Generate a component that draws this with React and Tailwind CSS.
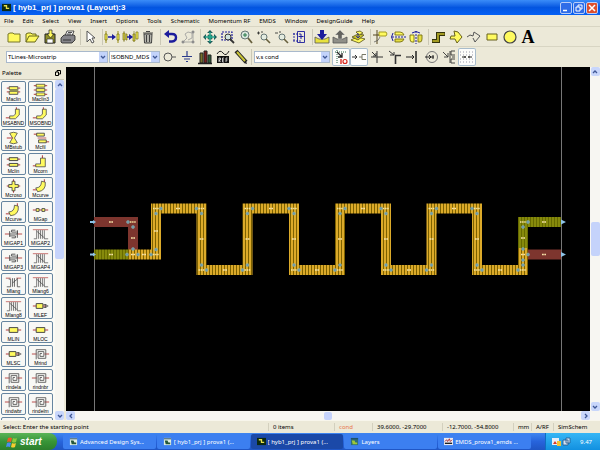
import React, { useState } from "react";
import clsx from "clsx";

const Y = "#fffa5e";
const K = "#222";
const N = "#1c1c9c";

const menus = [
  "File", "Edit", "Select", "View", "Insert", "Options", "Tools",
  "Schematic", "Momentum RF", "EMDS", "Window", "DesignGuide", "Help",
];

// 18x18 drawings used by both toolbars
const icons = {
  new: <path d="M3 6l2-1h3l1 1h6v8H3z" fill={Y} stroke="#77772a" />,
  open: (
    <g fill={Y} stroke="#66661c">
      <path d="M3 14V6l2-1h3l1 1h4v2" />
      <path d="M3 14l3-6h10l-4 6z" />
    </g>
  ),
  save: (
    <g>
      <path d="M4 6h10v9H4z" fill="#8f8f2a" stroke={K} />
      <path d="M6 11h6v4H6z" fill="#fff" stroke={K} strokeWidth=".6" />
      <path d="M8 2h3v4h2l-3.500 4L6 6h2z" fill={Y} stroke={K} strokeWidth=".7" />
    </g>
  ),
  print: (
    <g stroke={K} strokeWidth=".8">
      <path d="M6 8l2-5h7l-2 5z" fill="#fff" />
      <path d="M2 10l3-3h10l1 1v4l-3 3H3l-1-1z" fill="#85858a" />
      <path d="M4 12h8M9 4.500h4M8 6h4" />
    </g>
  ),
  pointer: <path d="M6 3v11l3-3 2 4 2-1-2-4h3z" fill="#fff" stroke="#555" />,
  move: (
    <g>
      <path d="M3 3v12M15 3v12" stroke="#998c10" />
      <path d="M2 6h2v6H2zM14 6h2v6h-2z" fill={Y} stroke="#776f10" strokeWidth=".8" />
      <path d="M5 9h5" stroke={N} strokeWidth="1.500" />
      <path d="M9 6l4 3-4 3z" fill={N} />
    </g>
  ),
  copy: (
    <g>
      <path d="M2 5h2v7H2zM5 6h1v6H5zM12 6h2v7h-2zM15 4h2v7h-2z" fill={Y} stroke="#776f10" strokeWidth=".7" />
      <path d="M13 3v11M3 3v11" stroke="#776f10" strokeWidth=".6" />
      <path d="M6 9h3" stroke={N} strokeWidth="1.500" />
      <path d="M8 6l4 3-4 3z" fill={N} />
    </g>
  ),
  trash: (
    <g stroke="#333" strokeWidth=".9">
      <path d="M5 6h8l-.5 9h-7z" fill="#b5b5ad" />
      <path d="M4 5h10M7 3.500h4M7.500 7v7M10.500 7v7" />
    </g>
  ),
  undo: (
    <g>
      <path d="M7 6h4q4 0 4 3.500T11 13.500H8" fill="none" stroke={N} strokeWidth="2.400" />
      <path d="M8 2v8L3 6z" fill={N} />
    </g>
  ),
  endcmd: (
    <g fill="none" stroke="#999" strokeWidth=".8">
      <path d="M4 14h11M5 13l3-3-2-4 3-2 4 1v5l-4 2M14 4v10" />
      <path d="M3 13h2v2H3zM13 13h2v2h-2zM13 3h2v2h-2z" fill="#777" />
    </g>
  ),
  fit: (
    <g>
      <path d="M7 7h4v4H7z" fill="#25b49a" stroke={K} strokeWidth=".5" />
      <path d="M9 2l3 3H6zM9 16l-3-3h6zM2 9l3-3v6zM16 9l-3 3V6z" fill="#1b5a58" />
      <path d="M9 4v10M4 9h10" stroke="#25a48c" strokeWidth="1.500" />
    </g>
  ),
  zoomArea: (
    <g fill="none">
      <path d="M3 4h10v8H3z" stroke={N} strokeWidth="1.200" strokeDasharray="2 1" />
      <circle cx="9" cy="9" r="3" stroke="#333" fill="#cfe3df" />
      <path d="M11 11l4 4" stroke="#333" strokeWidth="1.800" />
    </g>
  ),
  zoomPt: (
    <g fill="none">
      <circle cx="8" cy="7" r="4" stroke="#677" fill="#d9e7dd" />
      <path d="M8 5v4M6 7h4" stroke="#287a48" />
      <path d="M11 10l4 5" stroke="#665f3c" strokeWidth="1.800" />
    </g>
  ),
  zoomIn: (
    <g fill="none">
      <circle cx="9" cy="9" r="3" stroke="#677" fill="#e4ece0" />
      <path d="M11 11l4 4" stroke="#665f3c" strokeWidth="1.600" />
      <path d="M2 5h3M3.500 3.500v3M6 4h2" stroke={K} strokeWidth=".8" />
    </g>
  ),
  zoomOut: (
    <g fill="none">
      <circle cx="9" cy="9" r="3" stroke="#677" fill="#e4ece0" />
      <path d="M11 11l4 4" stroke="#665f3c" strokeWidth="1.600" />
      <path d="M2 5h3M6 4h2" stroke={K} strokeWidth=".8" />
    </g>
  ),
  pan: (
    <g fill="none" stroke={N}>
      <path d="M6.500 3.500h7v11h-7z" strokeWidth=".9" />
      <path d="M2 6h9M2 13h9M3 5v9" strokeDasharray="2 1" strokeWidth=".9" />
      <path d="M10 6v5M7.500 8.500h5" />
    </g>
  ),
  push: (
    <g>
      <path d="M2 9l4 2h6l4-2v6H2z" fill="#e8e23c" stroke="#555" strokeWidth=".8" />
      <path d="M7 2h4v4h3l-5 6-5-6h3z" fill={N} />
    </g>
  ),
  pop: (
    <g>
      <path d="M2 9l4 2h6l4-2v6H2z" fill="#8f8f88" stroke="#555" strokeWidth=".8" />
      <path d="M7 11h4V7h3L9 2 4 7h3z" fill="#63635e" stroke="#ddd" strokeWidth=".4" />
    </g>
  ),
  layers: (
    <g stroke="#55501a" strokeWidth=".8">
      <path d="M2 12l6-3 8 2-6 4z" fill={Y} />
      <path d="M3 9l6-3 6 1-6 5z" fill="#c9c32f" />
      <path d="M7 4l4-1 3 2-4 2z" fill={Y} />
      <path d="M9 5v5M7 8l2 2 2-2" stroke={N} fill="none" />
    </g>
  ),
  rotate: (
    <g fill="none">
      <path d="M8 4h7l1 2-1 2H8z" fill={Y} stroke="#a39b23" />
      <path d="M6 2v14M2 7h6" stroke="#55461f" />
      <path d="M3 14q5-1 6-5" stroke="#555" strokeWidth=".7" />
    </g>
  ),
  mirrorX: (
    <g>
      <path d="M6 4h5q3 0 4 3H6z" fill={Y} stroke="#776f10" strokeWidth=".9" />
      <path d="M6 14h5q3 0 4-3H6z" fill="#e5de44" stroke="#776f10" strokeWidth=".9" />
      <path d="M3 9h14" stroke={N} strokeDasharray="2 1" />
      <path d="M4 5q-3 4 0 8" fill="none" stroke={N} />
    </g>
  ),
  mirrorY: (
    <g>
      <path d="M3 7h4v7H5q-2 0-2-3z" fill={Y} stroke="#776f10" strokeWidth=".9" />
      <path d="M15 7h-4v7h2q2 0 2-3z" fill="#e5de44" stroke="#776f10" strokeWidth=".9" />
      <path d="M9 3v13" stroke={N} strokeDasharray="2 1" />
      <path d="M5 5q4-3 8 0" fill="none" stroke={N} />
    </g>
  ),
  trace: (
    <g fill="none">
      <path d="M3 13h6V6h7" stroke="#33330c" strokeWidth="4" />
      <path d="M3.500 13H9V6h6.500" stroke="#a39b23" strokeWidth="2" />
    </g>
  ),
  polygon: <path d="M7 3l4 1 4 5-5 6-2-4H3l1-3h4z" fill={Y} stroke="#66601c" />,
  polyline: <path d="M2 9l3-2 3 1 1-4 6 4-5 6-2-4" fill="none" stroke="#555" />,
  rect: <path d="M4 6h10v6H4z" fill={Y} stroke="#66601c" />,
  circle: <circle cx="9" cy="9" r="6" fill={Y} stroke="#444" strokeWidth="1.200" />,
  port: (
    <g fill="none" stroke="#555">
      <circle cx="8" cy="9" r="4" />
      <path d="M12 9h4" />
    </g>
  ),
  ground: <path d="M9 3v5M4 8.500h10M6 11h6M8 13.500h2" stroke="#2b3b8c" strokeWidth="1.200" />,
  library: (
    <g stroke={K} strokeWidth="1">
      <path d="M4 5h3v10H4z" fill="#77702a" />
      <path d="M8 3h3v12H8z" fill="#7a1f1f" />
      <path d="M12 7h3v8h-3z" fill="#2a5f37" />
      <path d="M2 15.500h14" strokeWidth="1.500" />
    </g>
  ),
  ref: (
    <g fill="none">
      <path d="M3 6q3-5 6-1t6-2" stroke={K} />
      <path d="M3 8h12v7H3z" fill="#111" />
      <path d="M5 14v-4h1.500v2H5l1.500 2M10 10H8.500v4H10M8.500 12H10M12 14v-4h1.500M12 12h1.500" stroke="#fff" strokeWidth=".7" />
    </g>
  ),
  pencil: (
    <g>
      <path d="M4 3l10 11" stroke="#222" strokeWidth="4" />
      <path d="M5 4l8 9" stroke="#c9c436" strokeWidth="2" />
      <path d="M15 16l-1-3-2 2z" fill={K} />
    </g>
  ),
  snapOn: (
    <g fill="none">
      <path d="M3 4h12M5 2v13" stroke="#2b6b48" strokeDasharray="1 1" />
      <path d="M5 4l5 5M10 5v4H6" stroke={K} strokeWidth="1.300" />
      <path d="M9 11v5" stroke="#d8271c" strokeWidth="1.400" />
      <circle cx="13" cy="13.500" r="2" stroke="#d8271c" strokeWidth="1.200" />
    </g>
  ),
  snapPin: (
    <g fill="none" stroke="#333">
      <path d="M2 9h5M5 7l2 2-2 2" />
      <path d="M9 9h3M16 6.500h-4v5h4" stroke="#776" />
    </g>
  ),
  snapVertex: <path d="M9 3v12M3 9h12M4 4l4 4M8 5v3H5" fill="none" stroke="#333" />,
  snapMid: (
    <g fill="none" stroke="#333">
      <path d="M15 7.500H9.500V16" strokeWidth="1.600" />
      <path d="M3 3l5 4M8 4v3H4" />
    </g>
  ),
  snapInter: (
    <g fill="none" stroke="#222">
      <path d="M2 9h8M8 7l2 2-2 2" />
      <path d="M12 3v12" strokeWidth="1.500" />
    </g>
  ),
  snapArc: (
    <g fill="none" stroke="#777">
      <circle cx="10" cy="9" r="5.500" />
      <path d="M3 9h9M7 7l2 2-2 2M11 7v4" stroke="#222" />
    </g>
  ),
  snapEdge: (
    <g fill="none" stroke="#333">
      <path d="M3 4l5 5M8 5v4H4M10 3v12M15 3h-4v4h4M15 11h-4v4h4M12 9h3" strokeWidth=".9" />
    </g>
  ),
  snapGrid: (
    <g>
      <path d="M2 4h14M2 7h14M2 11h14M2 14h14" stroke="#99a" strokeDasharray="1 2" />
      <path d="M4 9h4M10 9h4M7 8v2M11 8v2" stroke="#222" />
    </g>
  ),
};

const topGroups = [
  [["New", "new"], ["Open", "open"], ["Save", "save"], ["Print", "print"]],
  [["Select", "pointer"]],
  [["Move", "move"], ["Copy", "copy"], ["Delete", "trash"]],
  [["Undo", "undo"], ["End command", "endcmd"]],
  [["View all", "fit"], ["Zoom area", "zoomArea"], ["Zoom point", "zoomPt"], ["Zoom in", "zoomIn"], ["Zoom out", "zoomOut"], ["Pan", "pan"]],
  [["Push", "push"], ["Pop", "pop"], ["Layers", "layers"]],
  [["Rotate", "rotate"], ["Mirror X", "mirrorX"], ["Mirror Y", "mirrorY"]],
  [["Trace", "trace"], ["Polygon", "polygon"], ["Polyline", "polyline"], ["Rectangle", "rect"], ["Circle", "circle"]],
];

const partTools = [["Port", "port"], ["Ground", "ground"], ["Library", "library"], ["Reference", "ref"], ["Edit", "pencil"]];

const snapTools = [
  ["Snap", "snapOn"], ["Pin snap", "snapPin"], ["Vertex snap", "snapVertex"], ["Midpoint snap", "snapMid"],
  ["Intersect snap", "snapInter"], ["Arc snap", "snapArc"], ["Edge snap", "snapEdge"], ["Grid snap", "snapGrid"],
];

const R = "#b03434";

// 24x14 palette symbols
const symbols = {
  clin: (
    <g>
      <path d="M5 4h14M5 10h14" stroke={R} />
      <path d="M7.500 2.500h9v3h-9zM7.500 8.500h9v3h-9z" fill={Y} stroke="#444" />
    </g>
  ),
  clin2: (
    <g>
      <path d="M5 5h14M5 9h14" stroke={R} />
      <path d="M7.500 3.500h9v3h-9zM7.500 8.500h9v3h-9z" fill={Y} stroke="#555" />
      <path d="M8 6h9v3H8z" fill="#8f8f58" />
    </g>
  ),
  clin3: (
    <g>
      <path d="M5 2.500h14M5 7h14M5 11.500h14" stroke={R} />
      <path d="M7.500 1h9v3h-9zM7.500 5.500h9v3h-9zM7.500 10h9v3h-9z" fill={Y} stroke="#444" strokeWidth=".8" />
    </g>
  ),
  bend: (
    <g>
      <path d="M4 11h4M15 0v3" stroke={R} />
      <path d="M8 9h4l2-2V2h4v6l-4 4H8z" fill={Y} stroke="#444" strokeWidth=".8" />
    </g>
  ),
  corner: (
    <g>
      <path d="M4 11h4M14 0v3" stroke={R} />
      <path d="M7 9h5V3h5v9H7z" fill={Y} stroke="#444" strokeWidth=".8" />
    </g>
  ),
  stub: (
    <g>
      <path d="M8 2q4-2 8 0l-3 5 3 5q-4 2-8 0l3-5z" fill={Y} stroke="#444" strokeWidth=".8" />
      <path d="M5 7h6" stroke={R} />
    </g>
  ),
  cfil: (
    <g>
      <path d="M5 3h4M16 11h5" stroke={R} />
      <path d="M8 2h8v3H8zM10 9h8v3h-8z" fill={Y} stroke="#444" strokeWidth=".9" />
      <path d="M9 7h9" stroke={R} strokeWidth=".8" />
    </g>
  ),
  cross: (
    <g>
      <path d="M5 7h14M12 0v14" stroke={R} />
      <path d="M10.500 2h3v3.500H17v3h-3.500V12h-3V8.500H7v-3h3.500z" fill={Y} stroke="#444" strokeWidth=".9" />
    </g>
  ),
  curve: (
    <g>
      <path d="M4 11h4M16 0v3" stroke={R} />
      <path d="M7 9q6 0 6-7l4 1q1 9-8 10z" fill={Y} stroke="#444" strokeWidth=".8" />
    </g>
  ),
  gap: (
    <g>
      <path d="M4 7h16" stroke={R} />
      <path d="M7.500 5.500h3v3h-3zM13.500 5.500h3v3h-3z" fill={Y} stroke="#555" />
    </g>
  ),
  fingers: (
    <g fill="none" stroke="#444" strokeWidth=".9">
      <path d="M3 7h5M16 7h5" stroke={R} />
      <path d="M14 3h-4v2h5M8 7h8V3M10 11h4V9H8M8 4v6M16 4v7" />
    </g>
  ),
  lange: (
    <g fill="none" stroke="#444" strokeWidth=".7">
      <path d="M4 2.500h16" stroke={R} />
      <path d="M8 3v9M10 3v9M12 3v9M14 3v9M16 3v9M8 4l8 7M5 12h3M16 12h4" />
    </g>
  ),
  lang: (
    <g fill="none" stroke="#444" strokeWidth=".8">
      <path d="M4 3h5M15 3h5" stroke={R} />
      <path d="M7 4h2v8H5M11 3v9M13 3v9M16 3v9h3M11 8l5-4" />
    </g>
  ),
  line: (
    <g>
      <path d="M4 7h16" stroke={R} />
      <path d="M7.500 4.500h9v5h-9z" fill={Y} stroke="#444" />
    </g>
  ),
  lineEnd: (
    <g>
      <path d="M4 7h14" stroke={R} />
      <path d="M7.500 4.500h7v5h-7z" fill={Y} stroke="#444" />
      <path d="M15 5.500h3v3h-3M17 5v4M19.500 6v2" fill="none" stroke="#444" strokeWidth=".8" />
    </g>
  ),
  spiral: (
    <g fill="none" stroke="#555" strokeWidth=".9">
      <path d="M3 7h5M16 7h5" stroke={R} />
      <path d="M7.500 12.500v-10h10v9h-8v-7h6v5h-4v-3h2" />
    </g>
  ),
};

const palette = [
  ["Maclin", "clin2"], ["Maclin3", "clin3"],
  ["MSABND", "bend"], ["MSOBND", "bend"],
  ["MBstub", "stub"], ["Mcfil", "cfil"],
  ["Mclin", "clin"], ["Mcorn", "corner"],
  ["Mcroso", "cross"], ["Mcurve", "curve"],
  ["Mcurve", "curve"], ["MGap", "gap"],
  ["MIGAP1", "fingers"], ["MIGAP2", "lange"],
  ["MIGAP3", "fingers"], ["MIGAP4", "lange"],
  ["Mlang", "lang"], ["Mlang6", "lange"],
  ["Mlang8", "lange"], ["MLEF", "lineEnd"],
  ["MLIN", "line"], ["MLOC", "line"],
  ["MLSC", "lineEnd"], ["Mrind", "spiral"],
  ["rindela", "spiral"], ["rindnbr", "spiral"],
  ["rindwbr", "spiral"], ["rindelm", "spiral"],
  ["", "spiral"], ["", "line"],
];

const tasks = [
  { label: "Advanced Design Sys...", kind: "ads" },
  { label: "[ hyb1_prj ] prova1 (...", kind: "ads" },
  { label: "[ hyb1_prj ] prova1 (...", kind: "layout", active: true },
  { label: "Layers", kind: "layer" },
  { label: "EMDS_prova1_emds ...", kind: "emds" },
];

const Icon = ({ name }) => (
  <svg viewBox="0 0 18 18" className="size-[18px] shrink-0">{icons[name]}</svg>
);

const ToolButton = ({ label, name, pressed }) => (
  <button
    type="button"
    aria-label={label}
    className={clsx(
      "size-[18px] shrink-0 rounded-xs",
      pressed && "bg-[#fdfdfb] ring-1 ring-inset ring-[#a8bccb]"
    )}
  >
    <Icon name={name} />
  </button>
);

const Combo = ({ label, options, className }) => (
  <label className={clsx("relative block h-3 shrink-0 border border-[#a9b9cc] bg-white", className)}>
    <select
      aria-label={label}
      className="block h-full w-full appearance-none bg-transparent pl-px font-['Noto_Sans',sans-serif] text-[6px] leading-[10px] text-black outline-none"
    >
      {options.map((o) => (
        <option key={o}>{o}</option>
      ))}
    </select>
    <span className="pointer-events-none absolute inset-y-0 right-0 flex w-2 items-center justify-center bg-[#c3d3fb]">
      <Chevron dir="down" />
    </span>
  </label>
);

const Chevron = ({ dir }) => (
  <svg
    viewBox="0 0 8 8"
    className={clsx("size-2", dir === "up" && "rotate-180", dir === "left" && "rotate-90", dir === "right" && "-rotate-90")}
  >
    <path d="M2 3l2 2 2-2" fill="none" stroke="#3f5795" strokeWidth="1.300" />
  </svg>
);

const ScrollButton = ({ dir }) => (
  <button
    type="button"
    aria-label={`Scroll ${dir}`}
    className="flex size-[9px] shrink-0 items-center justify-center rounded-xs bg-[#c8d6fb]"
  >
    <Chevron dir={dir} />
  </button>
);

const meander =
  "M128 254.500H156V208.500H201.500V270H247.500V208.500H294V270H340V208.500H386V270H431.500V208.500H477V270H523V248";

// component pins at each bend of the line
const bends = [
  [156, 208.5, 1, 1], [201.5, 208.5, -1, 1], [201.5, 270, 1, -1], [247.5, 270, -1, -1],
  [247.5, 208.5, 1, 1], [294, 208.5, -1, 1], [294, 270, 1, -1], [340, 270, -1, -1],
  [340, 208.5, 1, 1], [386, 208.5, -1, 1], [386, 270, 1, -1], [431.5, 270, -1, -1],
  [431.5, 208.5, 1, 1], [477, 208.5, -1, 1], [477, 270, 1, -1], [523, 270, -1, -1],
  [156, 254.5, -1, -1], [133, 222, -1, 1], [523, 222, 1, 1],
];

const pins = [[127, 254.5], [138, 254.5], [133, 249], [523, 249], [523, 260], [528, 254.5]];

const marks = [
  [111, 222], [133, 238], [111, 254.5], [133, 254.5], [144, 254.5], [156, 231],
  [178, 208.5], [201.5, 239], [225, 270], [247.5, 239], [271, 208.5], [294, 239],
  [317, 270], [340, 239], [363, 208.5], [386, 239], [409, 270], [431.5, 239],
  [454, 208.5], [477, 239], [500, 270], [523, 238], [523, 254.5], [544, 222], [544, 254.5],
];

const Layout = () => (
  <svg viewBox="66 67 524 344" className="h-full w-full bg-black" role="img" aria-label="Layout">
    <defs>
      <pattern id="cond" width="3" height="8" patternUnits="userSpaceOnUse">
        <path d="M0 0h3v8H0z" fill="#dcaa2a" />
        <path d="M2 0h1v8H2z" fill="#7d6200" />
      </pattern>
      <pattern id="cond2" width="3" height="8" patternUnits="userSpaceOnUse">
        <path d="M0 0h3v8H0z" fill="#868a0c" />
        <path d="M2 0h1v8H2z" fill="#666a00" />
      </pattern>
    </defs>
    <path d="M94.500 67v344M561.500 67v344" stroke="#777" />
    <g fill="none" strokeWidth="10">
      <path d="M94 222H133V250M526 254.500H561" stroke="#7d352e" />
      <path d="M94 254.500H129M561 222H523V249" stroke="url(#cond2)" />
      <path d={meander} stroke="url(#cond)" />
    </g>
    {bends.map(([x, y, dx, dy], i) => (
      <g key={i}>
        <g fill="#6f9ca8" stroke="#8fb3b4" strokeWidth=".5">
          <circle cx={x + dx * 5} cy={y} r="1.500" />
          <circle cx={x} cy={y + dy * 5} r="1.500" />
        </g>
        <path d={`M${x - 3} ${y}h6`} stroke="#f3e3a0" strokeWidth="1.500" strokeDasharray="1.500 .6" />
      </g>
    ))}
    <g fill="#6f9ca8" stroke="#8fb3b4" strokeWidth=".5">
      {pins.map(([x, y], i) => (
        <circle key={i} cx={x} cy={y} r="1.500" />
      ))}
    </g>
    <g stroke="#f5e2a8" strokeWidth="1.500" strokeDasharray="1.800 .5">
      {marks.map(([x, y], i) => (
        <path key={i} d={`M${x - 2} ${y}h4`} />
      ))}
    </g>
    <g fill="#8fc4e8">
      <path d="M96 222l-3-2v1h-3v2h3v1zM96 254.500l-3-2v1h-3v2h3v1z" />
      <path d="M561 219.500l5 2.500-5 2.500zM561 252l5 2.500-5 2.500z" />
    </g>
  </svg>
);

const TaskIcon = ({ kind }) => (
  <svg viewBox="0 0 10 10" className="size-[9px] shrink-0">
    {kind === "emds" ? (
      <g>
        <path d="M0 1h10v8H0z" fill="#e9e9f2" />
        <path d="M1 5l2-2 1 2 2-3 1 3 2-2" fill="none" stroke="#b02a2a" />
        <path d="M1 7h8" stroke="#222" strokeWidth="1.500" />
      </g>
    ) : kind === "layout" ? (
      <g>
        <path d="M0 1h10v8H0z" fill="#0c2a14" />
        <path d="M2 3h3v3h3" fill="none" stroke="#e6df4b" strokeWidth="1.500" />
      </g>
    ) : (
      <g>
        <path d="M1 1h8v8H1z" fill={kind === "layer" ? "#2d6f78" : "#dfeee2"} />
        <path d="M2 4h3l1 2h2v2H3z" fill={kind === "layer" ? "#9dc83a" : "#24573a"} />
        <path d="M1 2h8" stroke="#173f63" />
      </g>
    )}
  </svg>
);

const Separator = () => <span className="-ml-px h-4 w-px shrink-0 bg-[#cbc8b6]" />;

const windowButton = "flex h-3 w-3 items-center justify-center rounded-xs border border-[#b8cdf8]";

const App = () => {
  const [selected, setSelected] = useState(null);

  return (
    <div className="flex h-screen flex-col overflow-hidden bg-[#ece9d8] font-['Liberation_Sans',Arial,sans-serif] text-[7px] text-black">
      <header className="flex h-[15px] shrink-0 items-center gap-[2px] bg-linear-to-b from-[#3a8cf8] via-[#0355e0] to-[#0560f5] px-[2px]">
        <TaskIcon kind="layout" />
        <h1 className="flex-1 text-[8px] font-bold leading-[10px] text-white">[ hyb1_prj ] prova1 (Layout):3</h1>
        <div className="flex gap-px">
          <button type="button" aria-label="Minimize" className={clsx(windowButton, "bg-[#2f6de8]")}>
            <svg viewBox="0 0 10 10" className="size-[10px]"><path d="M2 7.500h4" stroke="#fff" strokeWidth="1.500" /></svg>
          </button>
          <button type="button" aria-label="Restore" className={clsx(windowButton, "bg-[#2f6de8]")}>
            <svg viewBox="0 0 10 10" className="size-[10px]"><path d="M4 4V2h4v4H6M2 4h4v4H2z" fill="none" stroke="#fff" /></svg>
          </button>
          <button type="button" aria-label="Close" className={clsx(windowButton, "bg-[#dd4f2c]")}>
            <svg viewBox="0 0 10 10" className="size-[10px]"><path d="M2 2l6 6M8 2l-6 6" stroke="#fff" strokeWidth="1.500" /></svg>
          </button>
        </div>
      </header>

      <nav className="flex h-3 shrink-0 items-center gap-[9px] border-b border-[#d8d5c3] pl-1 font-['Noto_Sans',sans-serif] text-[6px] leading-[8px]">
        {menus.map((m) => (
          <button type="button" key={m}>{m}</button>
        ))}
      </nav>

      <div className="flex h-5 shrink-0 items-center gap-1 border-b border-[#d8d5c3] pl-[5px]">
        {topGroups.map((group, i) => (
          <div key={i} className="flex items-center">
            {i > 0 && <Separator />}
            {group.map(([label, name]) => (
              <ToolButton key={name} label={label} name={name} />
            ))}
            {i === topGroups.length - 1 && (
              <button type="button" aria-label="Text" className="w-[18px] text-center font-['Liberation_Serif',serif] text-[18px] font-bold leading-[18px]">
                A
              </button>
            )}
          </div>
        ))}
      </div>

      <div className="flex h-5 shrink-0 items-center pl-[6px]">
        <Combo label="Palette" className="w-[102px]" options={["TLines-Microstrip", "TLines-Stripline"]} />
        <Combo label="Component" className="ml-px w-[51px]" options={["!SOBND_MDS", "MLIN"]} />
        {partTools.map(([label, name]) => (
          <ToolButton key={name} label={label} name={name} />
        ))}
        <span className="ml-px h-4 w-px bg-[#cbc8b6]" />
        <Combo label="Layer" className="mx-[2px] w-[76px]" options={["v,s cond", "v,s cond2"]} />
        {snapTools.map(([label, name], i) => (
          <ToolButton key={name} label={label} name={name} pressed={i < 2 || i === 7} />
        ))}
      </div>

      <main className="flex min-h-0 flex-1">
        <aside className="flex w-[66px] shrink-0 flex-col border-r-2 border-[#ece9d8]">
          <div className="flex h-[13px] shrink-0 items-center justify-between border-b border-[#c9c6b5] pl-[2px] pr-[3px]">
            <h2 className="font-['Noto_Sans',sans-serif] text-[6px] leading-[8px]">Palette</h2>
            <button type="button" aria-label="Undock palette">
              <svg viewBox="0 0 6 6" className="size-[6px]"><path d="M2 2V.500h3.500V4H4M.500 2h3v3.500h-3z" fill="none" stroke="#000" /></svg>
            </button>
          </div>
          <div className="flex min-h-0 flex-1 bg-[#fbfbf6]">
            <div className="grid auto-rows-[22px] grid-cols-[25px_25px] content-start gap-[2px] overflow-hidden pl-px pt-px">
              {palette.map(([label, name], i) => (
                <button
                  type="button"
                  key={i}
                  onClick={() => setSelected(i)}
                  aria-label={label || "More parts"}
                  className={clsx(
                    "flex flex-col items-center rounded-xs border border-[#6685a0] pt-px",
                    selected === i ? "bg-[#e2e6f0]" : "bg-[#f8f8f5]"
                  )}
                >
                  <svg viewBox="0 0 24 14" className="h-[14px] w-[23px] shrink-0">{symbols[name]}</svg>
                  {label && <span className="text-[5px] leading-[5px]">{label}</span>}
                </button>
              ))}
            </div>
            <div className="ml-[2px] flex w-[9px] flex-col bg-[#f7f6f0]">
              <ScrollButton dir="up" />
              <div className="h-1/2 rounded-xs bg-[#c5d3fb]" />
              <div className="flex-1" />
              <ScrollButton dir="down" />
            </div>
          </div>
        </aside>
        <section className="flex min-w-0 flex-1 flex-col">
          <div className="flex min-h-0 flex-1">
            <div className="min-w-0 flex-1 bg-black">
              <Layout />
            </div>
            <div className="flex w-[10px] flex-col items-center justify-between bg-[#f7f6f2]">
              <ScrollButton dir="up" />
              <div className="h-[34px] w-[9px] rounded-xs bg-[#c5d3fb]" />
              <ScrollButton dir="down" />
            </div>
          </div>
          <div className="flex h-[9px] shrink-0 items-center justify-between bg-[#f7f6f2] pr-[10px]">
            <ScrollButton dir="left" />
            <div className="h-2 w-2 rounded-xs bg-[#c5d3fb]" />
            <ScrollButton dir="right" />
          </div>
        </section>
      </main>

      <footer className="flex h-[13px] shrink-0 items-center border-t border-[#f8f6ec] pl-[3px] font-['Noto_Sans',sans-serif] text-[6px] leading-[8px]">
        <p className="flex-1">Select: Enter the starting point</p>
        <p className="w-[66px] border-l border-[#d3d0be] pl-1">0 items</p>
        <p className="w-[38px] border-l border-[#d3d0be] pl-1 text-[#e8754e]">cond</p>
        <p className="w-[70px] border-l border-[#d3d0be] pl-1">39.6000, -29.7000</p>
        <p className="w-[71px] border-l border-[#d3d0be] pl-1">-12.7000, -54.8000</p>
        <p className="w-[18px] border-l border-[#d3d0be] pl-1">mm</p>
        <p className="w-[22px] border-l border-[#d3d0be] pl-1">A/RF</p>
        <p className="w-[47px] border-l border-[#d3d0be] pl-1">SimSchem</p>
      </footer>

      <div className="flex h-[17px] shrink-0 items-stretch bg-linear-to-b from-[#3f86f0] via-[#2764dc] to-[#1f55c4] text-white">
        <button type="button" className="flex w-[57px] items-center gap-[2px] rounded-r-lg bg-linear-to-b from-[#5ab457] via-[#389538] to-[#2c7f2c] pl-[6px]">
          <svg viewBox="0 0 12 12" className="size-3 shrink-0">
            <path d="M2 2q2-1 4 0l-1 4q-2-1-4 0z" fill="#ee5a24" />
            <path d="M7 2q2 1 4 0l-1 4q-2 1-4 0z" fill="#8ccc3c" />
            <path d="M1 7q2-1 4 0l-1 4q-2-1-4 0z" fill="#4a8cf0" />
            <path d="M6 7q2 1 4 0l-1 4q-2 1-4 0z" fill="#f8cc30" />
          </svg>
          <span className="text-[10px] font-bold italic leading-[12px]">start</span>
        </button>
        <div className="ml-[6px] flex min-w-0 flex-1 gap-px py-px pr-[14px]">
          {tasks.map((t, i) => (
            <button
              type="button"
              key={i}
              className={clsx(
                "flex min-w-0 flex-1 items-center gap-[2px] rounded-xs pl-[6px] text-left font-['Noto_Sans',sans-serif] text-[6px] leading-[8px]",
                t.active ? "bg-[#1b49a8]" : "bg-[#3c7ff0]"
              )}
            >
              <TaskIcon kind={t.kind} />
              <span className="truncate">{t.label}</span>
            </button>
          ))}
        </div>
        <div className="flex w-[55px] shrink-0 items-center gap-[2px] border-l border-[#0f6fc0] bg-linear-to-b from-[#35b6f5] to-[#1190e0] pl-[6px] pr-2">
          <svg viewBox="0 0 20 10" className="h-[10px] w-5">
            <path d="M0 1h7v7H0z" fill="#e8edf6" />
            <path d="M1 7l2-3 2 3z" fill="#d93a25" />
            <path d="M5 4h4v5H5z" fill="#f2c531" />
            <path d="M11 3h5v5h-5zM14 1h4v5h-4z" fill="#cfe0f2" stroke="#23598c" strokeWidth=".8" />
          </svg>
          <time className="flex-1 text-right font-['Noto_Sans',sans-serif] text-[6px] leading-[8px]">9.47</time>
        </div>
      </div>
    </div>
  );
};

export default App;
